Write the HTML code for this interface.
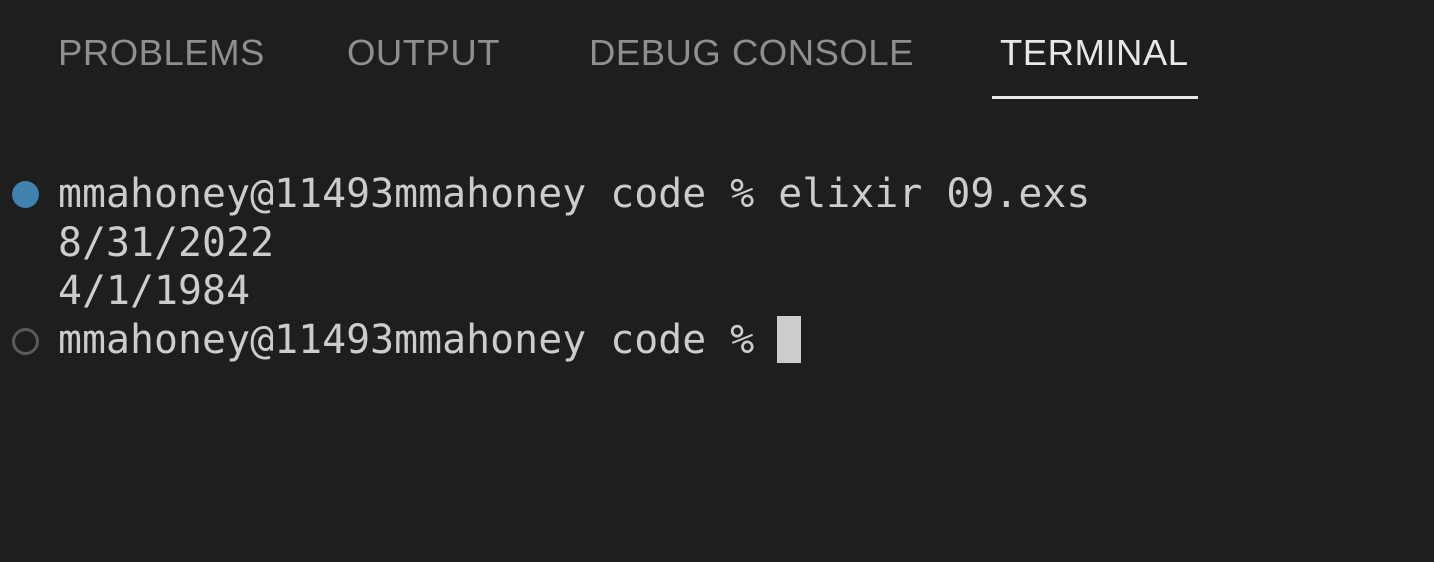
<!DOCTYPE html>
<html><head><meta charset="utf-8"><style>
html,body{margin:0;padding:0;background:#1e1e1e;width:1434px;height:562px;overflow:hidden;position:relative}
.tab{position:absolute;top:31px;font-family:"Liberation Sans",sans-serif;font-size:36.5px;letter-spacing:0.5px;line-height:44px;color:#8f8f8f;white-space:nowrap}
.t{position:absolute;left:58px;font-family:"DejaVu Sans Mono","Liberation Mono",monospace;font-size:39.8px;letter-spacing:0.05px;line-height:48.7px;color:#cccccc;white-space:pre}
</style></head><body>
<div class="tab" style="left:58px">PROBLEMS</div>
<div class="tab" style="left:347px">OUTPUT</div>
<div class="tab" style="left:589px">DEBUG CONSOLE</div>
<div class="tab" style="left:1000px;color:#e7e7e7">TERMINAL</div>
<div style="position:absolute;left:992px;top:96px;width:206px;height:3px;background:#e7e7e7"></div>
<div style="position:absolute;left:12px;top:181px;width:27px;height:27px;border-radius:50%;background:#3f82ad"></div>
<div style="position:absolute;left:12px;top:328px;width:21px;height:21px;border-radius:50%;border:3px solid #5a5a5a"></div>
<div class="t" style="top:170px">mmahoney@11493mmahoney code % elixir 09.exs</div>
<div class="t" style="top:219px">8/31/2022</div>
<div class="t" style="top:267px">4/1/1984</div>
<div class="t" style="top:316px">mmahoney@11493mmahoney code % </div>
<div style="position:absolute;left:777px;top:316px;width:24px;height:47px;background:#cccccc"></div>
</body></html>
